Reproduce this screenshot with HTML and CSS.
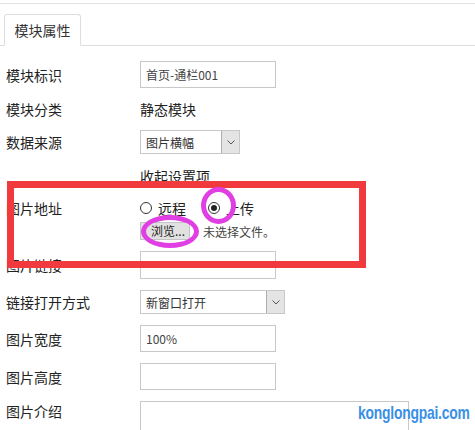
FILE: index.html
```html
<!DOCTYPE html>
<html lang="zh-CN">

<head>
  <meta charset="UTF-8">
  <meta name="viewport" content="width=device-width, initial-scale=1.0">
  <title>模块属性</title>
  <link rel="stylesheet" href="styles.css">
</head>

<body>
  <div class="panel">
    <div class="tabs">
      <div class="tab">模块属性</div>
    </div>

    <div class="form">
      <div class="row h-input">
        <div class="label">模块标识</div>
        <input class="text" type="text" value="首页-通栏001">
      </div>
      <div class="row h-text">
        <div class="label">模块分类</div>
        <div class="value">静态模块</div>
      </div>
      <div class="row h-select">
        <div class="label">数据来源</div>
        <div class="select sel-short">
          <span>图片横幅</span>
          <span class="arrow"><svg width="8" height="5" viewBox="0 0 8 5"><polyline points="0.5,0.5 4,4 7.5,0.5" fill="none" stroke="#555" stroke-width="1"/></svg></span>
        </div>
      </div>
      <div class="row h-toggle">
        <div class="label"></div>
        <div class="value">收起设置项</div>
      </div>
      <div class="row h-upload">
        <div class="label">图片地址</div>
        <div class="upload">
          <div class="radios">
            <span class="radio"></span><span class="radio-text">远程</span>
            <span class="radio checked"></span><span class="radio-text">上传</span>
          </div>
          <div class="file">
            <span class="browse">浏览...</span>
            <span class="no-file">未选择文件。</span>
          </div>
        </div>
      </div>
      <div class="row h-link">
        <div class="label">图片链接</div>
        <input class="text" type="text" value="">
      </div>
      <div class="row h-select">
        <div class="label">链接打开方式</div>
        <div class="select sel-long">
          <span>新窗口打开</span>
          <span class="arrow"><svg width="8" height="5" viewBox="0 0 8 5"><polyline points="0.5,0.5 4,4 7.5,0.5" fill="none" stroke="#555" stroke-width="1"/></svg></span>
        </div>
      </div>
      <div class="row h-input">
        <div class="label">图片宽度</div>
        <input class="text" type="text" value="100%">
      </div>
      <div class="row h-input">
        <div class="label">图片高度</div>
        <input class="text" type="text" value="">
      </div>
      <div class="row h-area">
        <div class="label">图片介绍</div>
        <textarea class="area"></textarea>
      </div>
    </div>
  </div>

  <!-- annotations drawn over the form -->
  <div class="mark-box"></div>
  <div class="mark-ring ring-radio"></div>
  <div class="mark-ring ring-browse"></div>
  <div class="watermark">konglongpai.com</div>
</body>

</html>
```

FILE: styles.css
```css
body {
  margin: 0;
  padding-top: 3px;
  background: #fff;
  color: #222;
  font-family: "Noto Sans CJK SC", "Noto Sans", sans-serif;
  font-size: 14px;
  position: relative;
  height: 427px;
  overflow: hidden;
}

.panel {
  border-top: 1px solid #e3e3e3;
}

.tabs {
  display: flex;
  padding: 10px 0 0 4px;
  border-bottom: 1px solid #dedede;
}

.tab {
  box-sizing: border-box;
  width: 77px;
  height: 32px;
  margin-bottom: -1px;
  border: 1px solid #dedede;
  border-bottom-color: #fff;
  border-radius: 3px 3px 0 0;
  background: #fff;
  color: #333;
  font-size: 14px;
  line-height: 30px;
  text-align: center;
}

.form {
  margin-top: 15px;
  padding-left: 6px;
  display: flex;
  flex-direction: column;
  gap: 11px;
}

.row {
  display: flex;
  align-items: center;
}

.h-input { height: 27px; }
.h-text { height: 20px; }
.h-select { height: 24px; }
.h-toggle { height: 22px; }
.h-link { height: 28px; }
.h-area { height: 40px; align-items: flex-start; }

.h-upload {
  height: 42px;
  align-items: flex-start;
}

.label {
  width: 134px;
  flex: none;
  color: #222;
  line-height: 20px;
}

.value {
  line-height: 20px;
}

.text {
  box-sizing: border-box;
  width: 136px;
  height: 100%;
  margin: 0;
  padding: 0 5px;
  border: 1px solid #c8c8c8;
  font-family: "Noto Sans CJK SC", "Noto Sans", sans-serif;
  font-size: 12px;
  color: #444;
  outline: none;
}

.select {
  box-sizing: border-box;
  height: 100%;
  display: flex;
  align-items: center;
  justify-content: space-between;
  border: 1px solid #c8c8c8;
  padding-left: 5px;
  font-size: 12px;
  color: #333;
}

.sel-short { width: 100px; }
.sel-long { width: 145px; }

.select .arrow {
  box-sizing: border-box;
  width: 18px;
  height: 100%;
  display: flex;
  align-items: center;
  justify-content: center;
  background: #e4e4e4;
  border-left: 1px solid #adadad;
}

.upload {
  display: flex;
  flex-direction: column;
  gap: 4px;
}

.radios {
  display: flex;
  align-items: center;
  height: 20px;
}

.radio {
  box-sizing: border-box;
  width: 12px;
  height: 12px;
  border: 1px solid #333;
  border-radius: 50%;
  display: flex;
  align-items: center;
  justify-content: center;
}

.radio.checked::after {
  content: "";
  width: 6px;
  height: 6px;
  border-radius: 50%;
  background: #222;
}

.radio-text {
  margin-left: 6px;
  margin-right: 22px;
  line-height: 20px;
}

.file {
  display: flex;
  align-items: center;
  height: 18px;
}

.browse {
  box-sizing: border-box;
  width: 50px;
  height: 18px;
  padding-left: 10px;
  background: #e1e1e1;
  border: 1px solid #c4c4c4;
  font-size: 12px;
  line-height: 16px;
  color: #222;
}

.no-file {
  margin-left: 13px;
  font-size: 12px;
  color: #444;
}

.area {
  box-sizing: border-box;
  width: 269px;
  height: 40px;
  margin: 0;
  border: 1px solid #c8c8c8;
  resize: none;
  outline: none;
}

/* red annotation frame */
.mark-box {
  position: absolute;
  left: 7px;
  top: 181px;
  width: 345px;
  height: 73px;
  border: 7px solid #f03a3d;
}

.mark-ring {
  position: absolute;
  border: 5px solid #e03fe3;
  border-radius: 50%;
}

.ring-radio {
  left: 201px;
  top: 187px;
  width: 25px;
  height: 27px;
}

.ring-browse {
  left: 141px;
  top: 215px;
  width: 48px;
  height: 23px;
}

.watermark {
  position: absolute;
  left: 358px;
  top: 402px;
  font-family: "Liberation Sans", sans-serif;
  font-weight: bold;
  font-size: 19px;
  letter-spacing: -0.3px;
  color: #3a8fe6;
  transform: scaleX(0.73);
  transform-origin: left top;
  white-space: nowrap;
}
```
